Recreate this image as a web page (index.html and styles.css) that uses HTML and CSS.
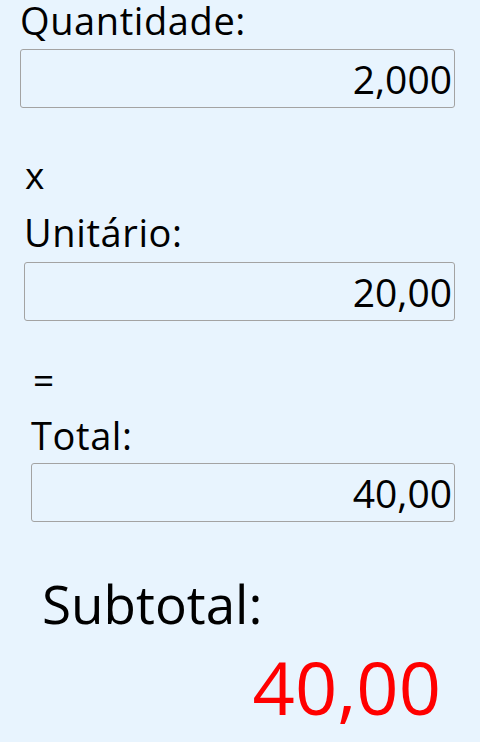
FILE: index.html
```html
<!DOCTYPE html>
<html lang="pt">
<head>
<meta charset="utf-8">
<title>Calculadora</title>
<link rel="stylesheet" href="styles.css">
</head>
<body>
<main class="calc">
  <section class="group group-qty">
    <div class="label label-first">Quantidade:</div>
    <div class="box">2,000</div>
  </section>
  <div class="op op-times">x</div>
  <section class="group group-unit">
    <div class="label">Unitário:</div>
    <div class="box">20,00</div>
  </section>
  <div class="op op-equals">=</div>
  <section class="group group-total">
    <div class="label">Total:</div>
    <div class="box">40,00</div>
  </section>
  <section class="summary">
    <div class="summary-label">Subtotal:</div>
    <div class="summary-value">40,00</div>
  </section>
</main>
</body>
</html>
```

FILE: styles.css
```css
html, body {
  margin: 0;
  padding: 0;
}
body {
  background: #e8f4fe;
  font-family: "Open Sans", "Noto Sans", sans-serif;
  color: #000;
  width: 480px;
  height: 742px;
  overflow: hidden;
}
.calc {
  display: flex;
  flex-direction: column;
  padding-top: 1px;
}
.group {
  display: flex;
  flex-direction: column;
  padding-right: 25px;
}
.group-qty { padding-left: 20px; }
.group-unit { padding-left: 24px; margin-top: 17px; }
.group-total { padding-left: 31px; margin-top: 15px; }
.label {
  font-size: 38px;
  line-height: 40px;
  letter-spacing: 0.6px;
}
.label-first {
  line-height: 38px;
}
.box {
  margin-top: 10px;
  height: 57px;
  border: 1px solid #a3a3a3;
  border-radius: 3px;
  display: flex;
  align-items: center;
  justify-content: flex-end;
  padding-right: 2px;
  font-size: 39px;
  line-height: 57px;
}
.group-total .box { margin-top: 8px; }
.op {
  font-size: 37px;
  line-height: 40px;
}
.op-times { padding-left: 25px; margin-top: 47px; }
.op-equals { padding-left: 33px; margin-top: 39px; }
.summary {
  display: flex;
  flex-direction: column;
  padding: 0 39px 0 42px;
  margin-top: 52px;
}
.summary-label {
  font-size: 53px;
  line-height: 60px;
}
.summary-value {
  margin-top: 13px;
  font-size: 74px;
  line-height: 80px;
  color: #ff0000;
  text-align: right;
}
```
